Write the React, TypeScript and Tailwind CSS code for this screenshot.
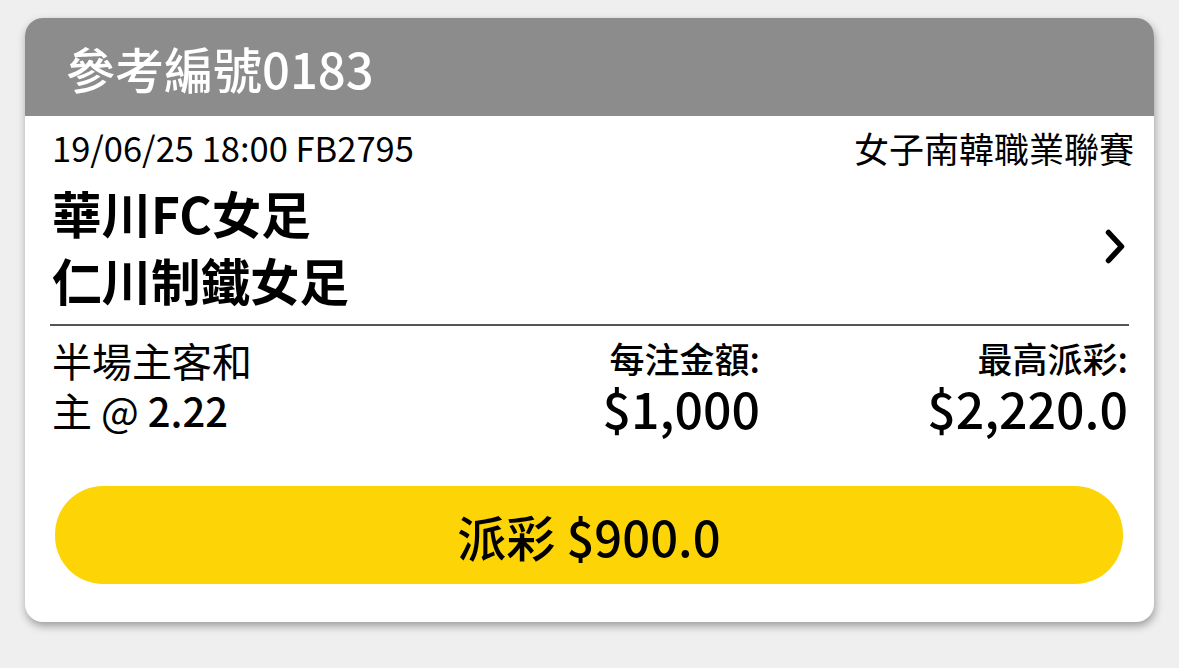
import React from "react";

export default function App() {
  const font = { fontFamily: '"Noto Sans CJK TC", "Noto Sans", sans-serif' };
  return (
    <div className="w-[1179px] h-[668px] bg-[#efefef] pt-[18px] pl-[25px]" style={font}>
      <div className="w-[1129px] h-[604px] rounded-[18px] bg-white overflow-hidden shadow-[1px_4px_8px_rgba(0,0,0,0.35)] flex flex-col">
        <div className="h-[98px] bg-[#8c8c8c] pl-[41px] flex items-center text-white text-[49px] font-medium leading-none">
          參考編號0183
        </div>
        <div className="h-[63px] flex items-center justify-between pl-[27px] pr-[20px] text-[34.5px] text-black leading-none">
          <span>19/06/25 18:00 FB2795</span>
          <span className="text-[35px]">女子南韓職業聯賽</span>
        </div>
        <div className="flex items-center justify-between pl-[27px] pr-[28px]">
          <div className="text-[49.5px] font-bold leading-[67px] text-black">
            <div>華川FC女足</div>
            <div>仁川制鐵女足</div>
          </div>
          <svg width="21" height="35" viewBox="0 0 21 35" fill="none">
            <path d="M3.5 3.5 L16.5 17.5 L3.5 31.5" stroke="#000" strokeWidth="5.5" strokeLinecap="round" strokeLinejoin="round" />
          </svg>
        </div>
        <div className="mt-[11px] ml-[25px] mr-[25px] h-[2px] bg-[#555]" />
        <div className="flex pt-[9px] pl-[27px] pr-[26px] text-black">
          <div className="flex-1 text-[40px] leading-[50px]">
            <div>半場主客和</div>
            <div>主 @ <span className="font-medium">2.22</span></div>
          </div>
          <div className="text-right">
            <div className="text-[35px] font-medium leading-[46px]">每注金額:</div>
            <div className="text-[50px] font-medium leading-[52px]">$1,000</div>
          </div>
          <div className="w-[368px] text-right">
            <div className="text-[35px] font-medium leading-[46px]">最高派彩:</div>
            <div className="text-[50px] font-medium leading-[52px]">$2,220.0</div>
          </div>
        </div>
        <div className="mt-[51px] ml-[30px] mr-[31px] h-[98px] rounded-[48px] bg-[#fdd506] flex items-center justify-center text-[49px] font-medium text-black leading-none">
          派彩 $900.0
        </div>
      </div>
    </div>
  );
}
